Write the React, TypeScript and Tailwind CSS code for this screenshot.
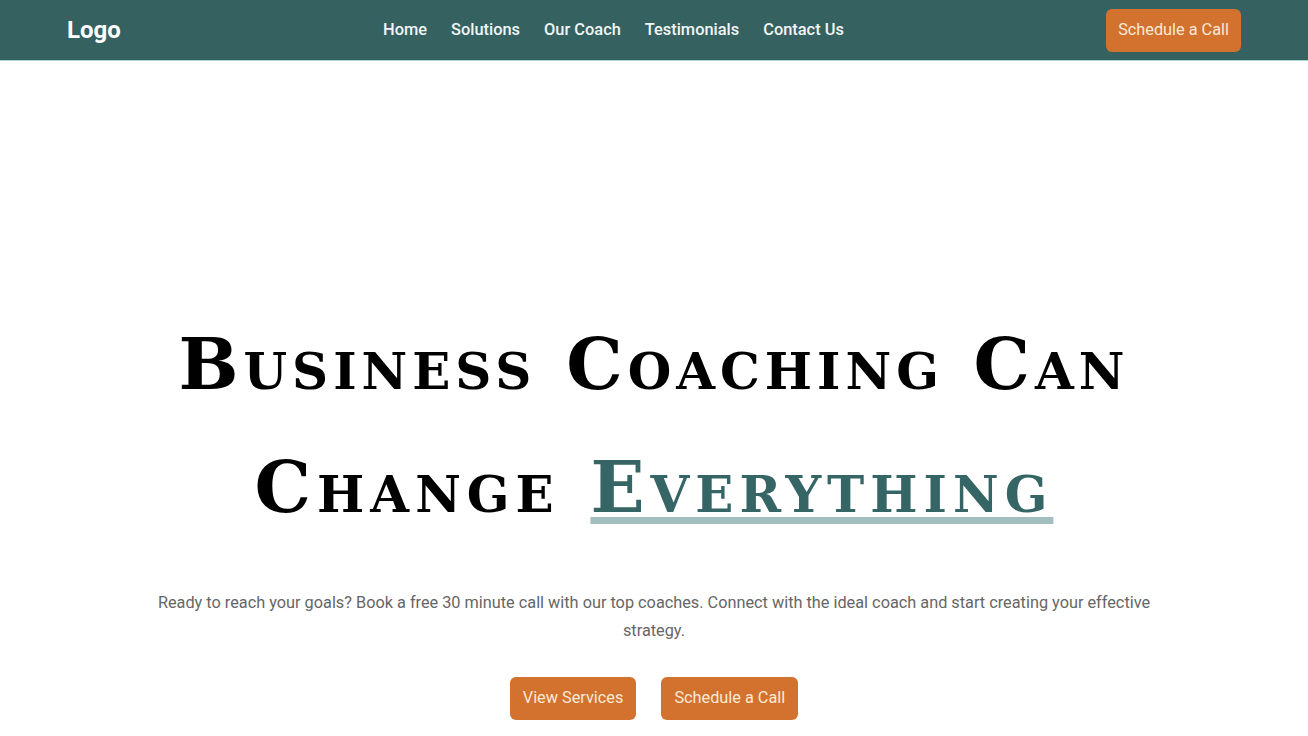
import React from "react";

const links = ["Home", "Solutions", "Our Coach", "Testimonials", "Contact Us"];

const App = () => {
  return (
    <div className="min-h-screen bg-white font-['Roboto',sans-serif]">
      <header className="h-[61px] bg-[#356161] border-b border-[#a9d3d3] flex items-center px-[67px]">
        <div className="text-white text-[24px] font-bold w-[316px]">Logo</div>

        <nav className="flex items-center gap-[24px] text-[#f1f5f5] text-[16.4px] font-medium">
          {links.map((l) => (
            <a key={l} href="#">
              {l}
            </a>
          ))}
        </nav>

        <button className="ml-auto bg-[#d2722e] text-[#fbe9d6] text-[16.3px] h-[43px] px-[12px] rounded-[6px]">
          Schedule a Call
        </button>
      </header>

      <main className="flex flex-col items-center pt-[242px]">
        <h1 className="text-center font-['DejaVu_Serif',serif] font-bold text-[71px] leading-[123px] tracking-[5px] [font-variant:small-caps] text-black">
          Business Coaching Can
          <br />
          <span className="tracking-[6px]">
            Change{" "}
            <span className="text-[#356565] underline decoration-[#a3bebe] decoration-[7px] underline-offset-[5px]">
              Everything
            </span>
          </span>
        </h1>

        <p className="mt-[40px] max-w-[1010px] text-center text-[#666] text-[16.3px] leading-[28px]">
          Ready to reach your goals? Book a free 30 minute call with our top
          coaches. Connect with the ideal coach and start creating your
          effective strategy.
        </p>

        <div className="flex gap-[25px] mt-[32px]">
          <button className="bg-[#d2722e] text-[#fbe9d6] text-[16.3px] h-[43px] px-[13px] rounded-[6px]">
            View Services
          </button>
          <button className="bg-[#d2722e] text-[#fbe9d6] text-[16.3px] h-[43px] px-[13px] rounded-[6px]">
            Schedule a Call
          </button>
        </div>
      </main>
    </div>
  );
};

export default App;
